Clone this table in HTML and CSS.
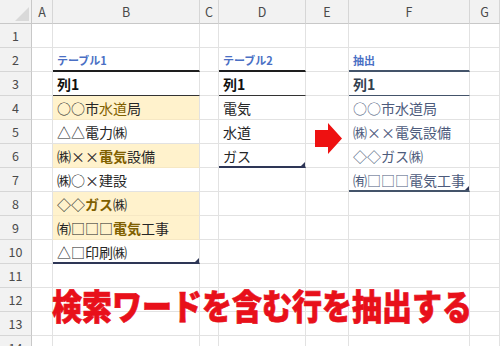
FILE: index.html
```html
<!DOCTYPE html>
<html>
<head>
    <meta charset="utf-8">
    <title>検索ワードを含む行を抽出する</title>
    <link rel="stylesheet" href="styles.css">
</head>
<body>
    <div class="sheet">
        <div class="grid" id="grid"></div>

        <svg class="arrow" width="28" height="31" viewBox="0 0 28 31">
            <path d="M0 7 H13 V0 L27 15.5 L13 31 V24 H0 Z" fill="#ee1111"/>
        </svg>

        <div class="caption">検索ワードを含む行を抽出する</div>
    </div>

    <script>
        const COLS = ['A', 'B', 'C', 'D', 'E', 'F', 'G'];
        const X = '<span class="x">×</span>';

        // セルの内容: [html, class]
        const data = {
            B2: ['テーブル1', 'tname'],
            B3: ['列1', 'thead'],
            B4: ['○○市<span class="hit">水道</span>局', 'mark'],
            B5: ['△△電力㈱', ''],
            B6: ['㈱' + X + X + '<b class="hit">電気</b>設備', 'mark'],
            B7: ['㈱○' + X + '建設', ''],
            B8: ['◇◇<b class="hit">ガス</b>㈱', 'mark'],
            B9: ['㈲□□□<b class="hit">電気</b>工事', 'mark'],
            B10: ['△□印刷㈱', 'last'],

            D2: ['テーブル2', 'tname'],
            D3: ['列1', 'thead'],
            D4: ['電気', ''],
            D5: ['水道', ''],
            D6: ['ガス', 'last'],

            F2: ['抽出', 'tname out'],
            F3: ['列1', 'thead out'],
            F4: ['○○市水道局', 'out'],
            F5: ['㈱' + X + X + '電気設備', 'out'],
            F6: ['◇◇ガス㈱', 'out'],
            F7: ['㈲□□□電気工事', 'out last']
        };

        const grid = document.getElementById('grid');

        function addCell(cls, html) {
            const d = document.createElement('div');
            d.className = cls;
            d.innerHTML = html;
            grid.appendChild(d);
        }

        // 列見出し
        addCell('cell hd corner', '');
        COLS.forEach(c => addCell('cell hd colhd', c));

        for (let r = 1; r <= 14; r++) {
            addCell('cell hd rowhd', r);
            COLS.forEach(c => {
                const v = data[c + r];
                addCell('cell ' + (v ? v[1] : ''), v ? v[0] : '');
            });
        }
    </script>
</body>
</html>
```

FILE: styles.css
```css
body { margin: 0; background: #fff; font-family: "Noto Sans CJK JP", "Noto Sans", sans-serif; }
.sheet { position: relative; width: 500px; height: 346px; overflow: hidden; }

.grid { display: grid; grid-template-columns: 32px 21px 147px 19px 87px 43px 121px 30px; grid-auto-rows: 24px; }
.cell { box-sizing: border-box; position: relative; display: flex; align-items: center; padding: 1px 0 0 4px; border-right: 1px solid #e2e2e2; border-bottom: 1px solid #e2e2e2; font-size: 14px; color: #262626; white-space: nowrap; overflow: hidden; }
.x { display: inline-block; width: 1em; text-align: center; }

/* 見出し */
.hd { justify-content: center; padding: 0; background: #f2f2f2; color: #4a4a4a; font-size: 12.5px; border-color: #d6d6d6; }
.colhd { border-bottom-color: #c8c8c8; }
.rowhd { border-right-color: #c8c8c8; }
.corner { border-bottom-color: #c8c8c8; border-right-color: #c8c8c8; }
.corner::after { content: ''; position: absolute; right: 2px; bottom: 2px; border-left: 14px solid transparent; border-bottom: 14px solid #d9d9d9; }

/* テーブル */
.tname { font-size: 11px; font-weight: bold; color: #4a6fc4; border-bottom: 2px solid #1e1e1e; }
.thead { font-weight: bold; color: #111; border-bottom: 1px solid #333; }
.mark { background: #fff2cc; border-bottom-color: #f6e8c4; }
.hit { color: #7f6000; }
.last { border-bottom: 2px solid #2e3656; }
.last::after { content: ''; position: absolute; right: 0; bottom: 0; border-left: 4px solid transparent; border-bottom: 4px solid #2e3656; }

/* 抽出結果 */
.out { color: #4d5b7c; }
.tname.out { color: #4a6fc4; border-bottom-color: #44546a; }
.thead.out { color: #333f50; border-bottom-color: #44546a; }
.out.last { border-bottom-color: #44546a; }

.arrow { position: absolute; left: 315px; top: 123px; }
.caption { position: absolute; left: 52px; top: 287px; font-size: 30px; line-height: 1; font-weight: 900; color: #e8101a; white-space: nowrap; -webkit-text-stroke: 0.6px #e8101a; transform: scaleY(1.18); transform-origin: left top; }
```
